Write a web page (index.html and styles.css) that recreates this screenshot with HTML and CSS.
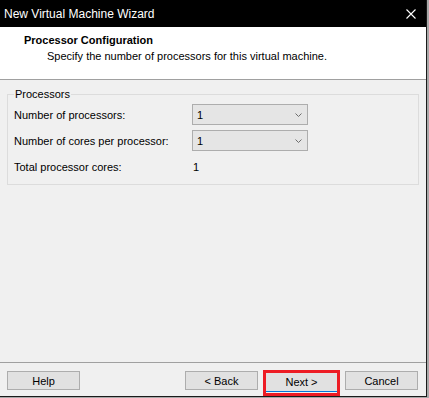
FILE: index.html
```html
<!DOCTYPE html>
<html>
<head>
	<title>New Virtual Machine Wizard</title>
	<meta charset="UTF-8">
	<link rel="stylesheet" href="styles.css">
</head>
<body>
	<div class="window">
		<div class="titlebar">
			<span class="title">New Virtual Machine Wizard</span>
			<svg class="close" width="10" height="10" viewBox="0 0 10 10">
				<path d="M0.5 0.5 L9.5 9.5 M9.5 0.5 L0.5 9.5" stroke="#fff" stroke-width="1.1" fill="none"/>
			</svg>
		</div>
		<div class="header">
			<div class="h-title">Processor Configuration</div>
			<div class="h-sub">Specify the number of processors for this virtual machine.</div>
		</div>
		<div class="content">
			<fieldset class="group">
				<legend>Processors</legend>
				<div class="row">
					<span class="label">Number of processors:</span>
					<div class="select">
						<span>1</span>
						<svg width="7" height="4" viewBox="0 0 7 4"><path d="M0.5 0.5 L3.5 3.5 L6.5 0.5" stroke="#6d6d6d" fill="none"/></svg>
					</div>
				</div>
				<div class="row">
					<span class="label">Number of cores per processor:</span>
					<div class="select">
						<span>1</span>
						<svg width="7" height="4" viewBox="0 0 7 4"><path d="M0.5 0.5 L3.5 3.5 L6.5 0.5" stroke="#6d6d6d" fill="none"/></svg>
					</div>
				</div>
				<div class="row">
					<span class="label">Total processor cores:</span>
					<span class="value">1</span>
				</div>
			</fieldset>
		</div>
		<div class="footer">
			<button class="btn">Help</button>
			<span class="spacer"></span>
			<button class="btn">&lt; Back</button>
			<span class="mark"><button class="btn default">Next &gt;</button></span>
			<button class="btn">Cancel</button>
		</div>
	</div>
</body>
</html>
```
FILE: styles.css
```css
*{
	margin: 0;
	padding: 0;
	box-sizing: border-box;
}
body{
	background: #a8a8a8;
	font-family: "Liberation Sans", Arial, sans-serif;
	font-size: 11px;
	color: #000;
	width: 429px;
	height: 398px;
	overflow: hidden;
}
.window{
	width: 427px;
	height: 397px;
	border-right: 1px solid #1a1a1a;
	border-bottom: 1px solid #1a1a1a;
	display: flex;
	flex-direction: column;
	background: #f0f0f0;
}
.titlebar{
	height: 27px;
	background: #000;
	color: #fff;
	display: flex;
	align-items: center;
	padding-left: 4px;
	padding-right: 10px;
	flex: none;
}
.title{
	font-size: 12px;
	flex: 1;
	padding-top: 1px;
}
.close{
	display: block;
	margin-top: 1px;
}
.header{
	height: 53px;
	background: #fff;
	border-bottom: 1px solid #a0a0a0;
	padding-top: 5px;
	line-height: 16px;
	flex: none;
}
.h-title{
	font-weight: bold;
	padding-left: 24px;
}
.h-sub{
	padding-left: 47px;
}
.content{
	flex: 1;
}
.group{
	margin: 6px 7px 0;
	border: 1px solid #dcdcdc;
	padding: 2px 6px 7px 6px;
	display: flex;
	flex-direction: column;
	gap: 5px;
}
.group legend{
	padding: 0 1px;
	line-height: 16px;
}
.row{
	height: 21px;
	display: flex;
	align-items: center;
}
.label{
	width: 178px;
	line-height: 16px;
	flex: none;
}
.value{
	padding-left: 1px;
}
.select{
	width: 116px;
	height: 21px;
	border: 1px solid #adadad;
	background: #e5e5e5;
	display: flex;
	align-items: center;
	justify-content: space-between;
	padding: 0 5px 0 4px;
}
.select svg{
	display: block;
}
.footer{
	height: 34px;
	border-top: 1px solid #a0a0a0;
	display: flex;
	align-items: flex-start;
	padding: 8px 8px 0 7px;
	gap: 8px;
	flex: none;
}
.spacer{
	flex: 1;
}
.btn{
	width: 73px;
	height: 19px;
	border: 1px solid #adadad;
	background: #e1e1e1;
	font-family: "Liberation Sans", Arial, sans-serif;
	font-size: 11px;
	color: #000;
}
.mark{
	display: block;
	border: 3px solid #ed1c24;
	margin: -1px -3px -5px;
	padding: 0 0 1px 0;
	line-height: 0;
}
.default{
	border: none;
	border-bottom: 1px solid #0078d7;
	width: 71px;
	height: 19px;
}
```
